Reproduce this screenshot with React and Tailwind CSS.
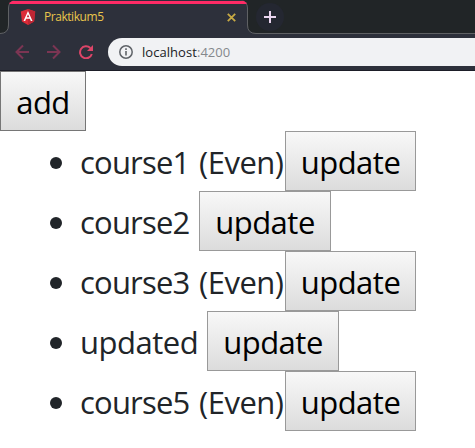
const courses = [
  { name: "course1", even: true },
  { name: "course2", even: false },
  { name: "course3", even: true },
  { name: "updated", even: false },
  { name: "course5", even: true },
];

function AngularLogo() {
  return (
    <svg className="h-4 w-4 shrink-0" viewBox="0 0 16 16">
      <path d="M8 0 15.2 2.6 14.1 12.4 8 16 1.9 12.4.8 2.6Z" fill="#dd2b38" />
      <path d="M8 0 15.2 2.6 14.1 12.4 8 16Z" fill="#bd2634" />
      <path
        d="M8 2 3.5 12h1.7l.9-2.3h3.8l.9 2.3h1.7ZM8 5.2l1.3 3.1H6.7Z"
        fill="#fff"
        fillRule="evenodd"
      />
    </svg>
  );
}

function TabStrip() {
  return (
    <div className="flex h-[34px] border-b border-[#5f6164] bg-[#212527]">
      <div className="relative ml-2 h-[34px] w-60 shrink-0 overflow-visible rounded-t-lg border-x border-[#5f6164] bg-[#2d303b]">
        <div className="absolute -inset-x-px top-0 h-[34px] overflow-hidden rounded-t-lg">
          <div className="mt-px h-[3px] bg-[#ff2b66]" />
        </div>
        <Foot className="absolute -left-[9px] bottom-0 h-[9px] w-[9px] -scale-x-100" />
        <Foot className="absolute -right-[9px] bottom-0 h-[9px] w-[9px]" />
        <div className="relative flex h-[34px] items-center pl-[11px] pr-[11px]">
          <AngularLogo />
          <span className="ml-2 flex-1 text-[12px] leading-4 tracking-[-0.45px] text-[#e9c64b]">
            Praktikum5
          </span>
          <svg className="h-[9px] w-[9px]" viewBox="0 0 9 9">
            <path d="M.8.8 8.2 8.2M8.2.8.8 8.2" stroke="#c7a944" strokeWidth="1.8" />
          </svg>
        </div>
      </div>
      <div className="ml-2 mt-[3px] flex h-7 w-7 items-center justify-center rounded-full bg-[#242731]">
        <svg className="h-3 w-3" viewBox="0 0 12 12">
          <path d="M6 0v12M0 6h12" stroke="#ead5f0" strokeWidth="2" />
        </svg>
      </div>
    </div>
  );
}

function Foot({ className }) {
  return (
    <svg className={className} viewBox="0 0 9 9">
      <path d="M0 0H.5Q.5 7.5 9 8.5V9H0Z" fill="#2d303b" />
      <path d="M.5 0Q.5 8.5 9 8.5" fill="none" stroke="#5f6164" />
    </svg>
  );
}

function Toolbar() {
  return (
    <div className="flex h-[37px] items-center border-b border-[#1d1e28] bg-[#2d303b]">
      <svg className="ml-[15px] h-4 w-[14px]" viewBox="0 0 14 16" fill="none" stroke="#7c3553" strokeWidth="2">
        <path d="M14 8H1.5M8 1.5 1.5 8 8 14.5" />
      </svg>
      <svg className="ml-[18px] h-4 w-[14px]" viewBox="0 0 14 16" fill="none" stroke="#7c3553" strokeWidth="2">
        <path d="M0 8h12.5M6 1.5 12.5 8 6 14.5" />
      </svg>
      <svg className="ml-[18px] h-[14px] w-[14px]" viewBox="0 0 14 14">
        <path d="M11.3 3A6 6 0 1 0 12.8 9" fill="none" stroke="#dc4568" strokeWidth="2" />
        <path d="M14 0v6H8Z" fill="#dc4568" />
      </svg>
      <div className="ml-[15px] flex h-7 flex-1 items-center rounded-l-full bg-[#f1f2f4] pl-[11px]">
        <svg className="h-[14px] w-[14px]" viewBox="0 0 14 14">
          <circle cx="7" cy="7" r="6.2" fill="none" stroke="#5f6368" strokeWidth="1.5" />
          <path d="M7 6v4.5M7 3.3v1.6" stroke="#5f6368" strokeWidth="1.6" />
        </svg>
        <span className="ml-[9px] text-[13px] leading-5 tracking-[0.05px] text-[#202124]">
          localhost<span className="text-[#85888c]">:4200</span>
        </span>
      </div>
    </div>
  );
}

function Button({ children, className }) {
  return (
    <button
      className={`block h-[60px] shrink-0 border bg-linear-to-b from-[#f8f8f8] to-[#dcdcdc] pt-[1px] text-black ${className}`}
    >
      {children}
    </button>
  );
}

export default function App() {
  return (
    <div className="h-[448px] w-[475px] overflow-hidden bg-white font-['Open_Sans','Noto_Sans',sans-serif]">
      <TabStrip />
      <Toolbar />
      <main className="text-[31px] leading-[58px] tracking-[-0.5px] text-[#212529]">
        <Button className="w-[86px] border-[#767676]">add</Button>
        <ul>
          {courses.map((course) => (
            <li key={course.name} className="flex h-[60px]">
              <span className="ml-[50px] mt-[26px] h-3 w-3 shrink-0 rounded-full bg-[#212529]" />
              <span className={`ml-[18px] whitespace-pre pt-[2px] ${course.even ? "w-[205px]" : course.name === "updated" ? "w-[127px]" : "w-[119px]"}`}>
                <span className={course.name === "updated" ? "" : "tracking-[-0.8px]"}>{course.name}</span>
                {course.even && <span className="ml-[2px]"> (Even)</span>}
              </span>
              <Button className={course.even ? "w-[131px] border-[#999999]" : "w-[132px] border-[#999999]"}>
                update
              </Button>
            </li>
          ))}
        </ul>
      </main>
    </div>
  );
}
